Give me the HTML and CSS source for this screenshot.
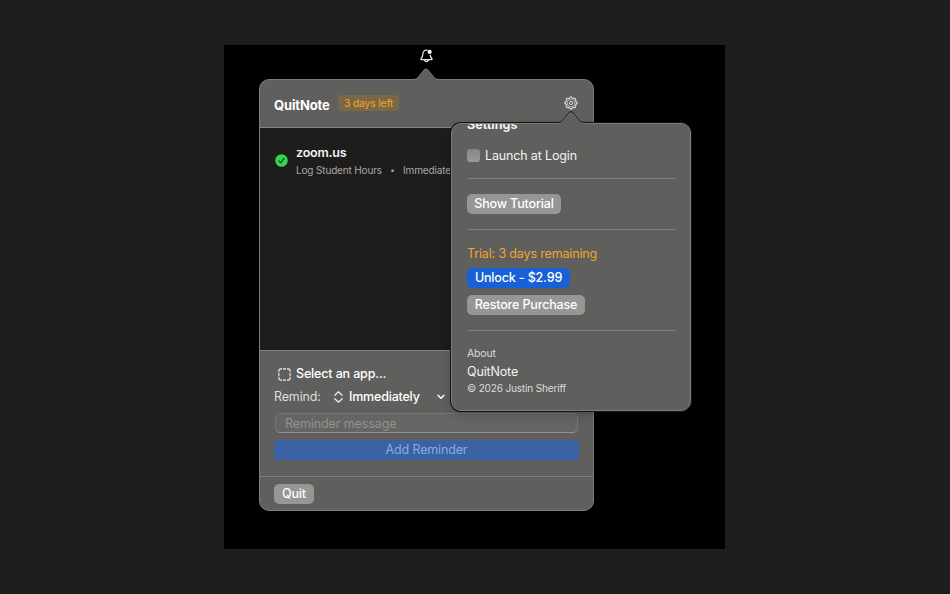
FILE: index.html
```html
<!DOCTYPE html>
<html lang="en">
<head>
  <meta charset="UTF-8" />
  <meta name="viewport" content="width=device-width, initial-scale=1.0"/>
  <title>QuitNote</title>
  <link rel="stylesheet" href="styles.css">
</head>
<body>

  <div class="desktop">
    <!-- Menu bar icon -->
    <div class="menubar">
      <svg class="bell" width="15" height="16" viewBox="0 0 15 16" fill="none" stroke="#e6e6e6" stroke-width="1.3" stroke-linecap="round" stroke-linejoin="round">
        <path d="M8 2.2C5.4 1.8 3.9 3.7 3.8 6C3.7 8.8 3 9.5 2.1 10.6C1.7 11.2 2 11.7 2.6 11.7H12.4C13 11.7 13.3 11.2 12.9 10.6C12 9.5 11.4 8.8 11.3 7.4"/>
        <path d="M5.7 12.2C6 14.1 9 14.1 9.3 12.2"/>
        <circle cx="10.6" cy="3.9" r="2.1" fill="#fff" stroke="none"/>
      </svg>
    </div>

    <!-- Main popover -->
    <div class="popover">
      <svg class="arrow" width="30" height="14" viewBox="0 0 30 14">
        <path d="M0 13C5 13 6 11.5 8 9L13 3Q15 .6 17 3L22 9C24 11.5 25 13 30 13V14H0Z" fill="#5f5f5d"/>
        <path d="M0 12.5C5 12.5 6 11.5 8 9L13 3Q15 .6 17 3L22 9C24 11.5 25 12.5 30 12.5" fill="none" stroke="#7d7d7b" stroke-width=".8"/>
      </svg>

      <div class="header">
        <h1>QuitNote</h1>
        <span class="badge">3 days left</span>
        <svg class="gear" width="14" height="14" viewBox="0 0 14 14" fill="none" stroke="#d6d6d5">
          <path d="M7 .7L8.5 2.1L11.4 2.6L11.9 5.5L13.3 7L11.9 8.5L11.4 11.4L8.5 11.9L7 13.3L5.5 11.9L2.6 11.4L2.1 8.5L.7 7L2.1 5.5L2.6 2.6L5.5 2.1Z" stroke-width="1.1" stroke-linejoin="round"/>
          <circle cx="7" cy="7" r="3.9" stroke-width=".7"/>
          <circle cx="7" cy="7" r="1.6" stroke-width="1"/>
        </svg>
      </div>

      <div class="list">
        <div class="item">
          <svg class="check" width="13" height="13" viewBox="0 0 13 13">
            <circle cx="6.5" cy="6.5" r="6.3" fill="#35d353"/>
            <path d="M4 6.9L5.8 8.8L9 4.3" fill="none" stroke="#16461f" stroke-width="1.2" stroke-linecap="round" stroke-linejoin="round"/>
          </svg>
          <div class="item-text">
            <div class="item-name">zoom.us</div>
            <div class="item-detail"><span>Log Student Hours</span><span class="dot">•</span><span>Immediately</span></div>
          </div>
        </div>
      </div>

      <div class="form">
        <div class="picker">
          <svg width="13" height="13" viewBox="0 0 13 13" fill="none" stroke="#f0f0f0" stroke-width="1.1" stroke-linecap="round">
            <path d="M.9 3.6V3Q.9 .9 3 .9H3.6M9.4 .9H10Q12.1 .9 12.1 3V3.6M12.1 9.4V10Q12.1 12.1 10 12.1H9.4M3.6 12.1H3Q.9 12.1 .9 10V9.4"/>
            <path d="M5.4 .9H7.6M5.4 12.1H7.6M.9 5.4V7.6M12.1 5.4V7.6"/>
          </svg>
          <span class="select-app">Select an app...</span>
        </div>
        <div class="remind">
          <span class="remind-label">Remind:</span>
          <svg class="updown" width="9" height="12" viewBox="0 0 9 12" fill="none" stroke="#f0f0f0" stroke-width="1.2" stroke-linecap="round" stroke-linejoin="round">
            <path d="M.8 4.3L4.5 .8L8.2 4.3M.8 7.7L4.5 11.2L8.2 7.7"/>
          </svg>
          <span class="remind-value">Immediately</span>
          <svg class="chevron" width="8" height="6" viewBox="0 0 8 6" fill="none" stroke="#fff" stroke-width="1.5" stroke-linecap="round" stroke-linejoin="round">
            <path d="M1.2 1.4L4 4.3L6.8 1.4"/>
          </svg>
        </div>
        <div class="input">Reminder message</div>
        <div class="add-btn">Add Reminder</div>
      </div>

      <div class="footer">
        <div class="btn quit">Quit</div>
      </div>
    </div>

    <!-- Settings popover, opens over the main one -->
    <div class="settings">
      <svg class="arrow" width="30" height="14" viewBox="0 0 30 14">
        <path d="M0 12.2C5 12.2 6 11 8 8.5L13 2.5Q15 0 17 2.5L22 8.5C24 11 25 12.2 30 12.2V14H0Z" fill="#5f5f5d"/>
        <path d="M0 11.5C5 11.5 6 10.5 8 8L13 2Q15 -.4 17 2L22 8C24 10.5 25 11.5 30 11.5" fill="none" stroke="#1c1c1b" stroke-width="1.1"/>
        <path d="M0 12.5C5 12.5 6 11.5 8 9L13 3Q15 .8 17 3L22 9C24 11.5 25 12.5 30 12.5" fill="none" stroke="#7b7b79" stroke-width=".7"/>
      </svg>
      <div class="settings-body">
        <h2>Settings</h2>
        <div class="launch"><span class="checkbox"></span><span class="launch-label">Launch at Login</span></div>
        <div class="section">
          <div class="btn tutorial">Show Tutorial</div>
        </div>
        <div class="section purchase">
          <div class="trial">Trial: 3 days remaining</div>
          <div class="btn unlock">Unlock - $2.99</div>
          <div class="btn restore">Restore Purchase</div>
        </div>
        <div class="section about">
          <div class="about-title">About</div>
          <div class="about-name">QuitNote</div>
          <div class="about-copy">© 2026 Justin Sheriff</div>
        </div>
      </div>
    </div>
  </div>

</body>
</html>
```

FILE: styles.css
```css
* {
  margin: 0; padding: 0;
  box-sizing: border-box;
}

body {
  height: 594px;
  overflow: hidden;
  background: #1e1e1e;
  font-family: Inter, sans-serif;
  font-size: 12.5px;
  letter-spacing: -0.15px;
  line-height: 16px;
  color: #f2f2f2;
  white-space: nowrap;
  padding: 45px 0 0 224px;
}

.desktop {
  position: relative;
  width: 501px;
  height: 504px;
  background: #000;
  padding: 0 35px;
}

.menubar {
  height: 34px;
  padding: 3px 0 0 160px;
}

.bell {
  display: block;
}

.popover {
  position: relative;
  width: 335px;
  height: 432px;
  background: #5f5f5d;
  border: 1px solid #7d7d7b;
  border-radius: 10px;
  display: flex;
  flex-direction: column;
}

.arrow {
  position: absolute;
  display: block;
}

.popover > .arrow {
  left: 151px;
  top: -13px;
}

.header {
  height: 48px;
  padding: 0 15px 0 14px;
  display: flex;
  align-items: center;
  border-bottom: 1px solid #858583;
}

h1 {
  font-size: 13px;
  font-weight: 700;
  width: 64px;
  padding-top: 2px;
  color: #fff;
}

.badge {
  height: 16px;
  width: 61px;
  line-height: 17px;
  margin-top: -1px;
  text-align: center;
  border-radius: 4px;
  background: #7a6747;
  color: #f5a623;
  font-size: 10.3px;
}

.gear {
  margin-left: auto;
  margin-top: -1px;
}

.list {
  height: 222px;
  background: #1e1d1c;
  padding: 17px 15px;
}

.item {
  display: flex;
  align-items: center;
}

.check {
  margin-right: 8px;
  margin-top: -1px;
}

.item-name {
  font-weight: 600;
  letter-spacing: -0.2px;
}

.item-detail {
  display: flex;
  font-size: 10px;
  line-height: 14px;
  margin-top: 2px;
  color: #a8a8a7;
}

.dot {
  width: 21px;
  text-align: center;
  font-size: 8px;
}

.form {
  height: 126px;
  border-top: 1px solid #80807e;
  padding: 14px 14px 0;
}

.picker {
  height: 18px;
  padding-left: 4px;
  display: flex;
  align-items: center;
  gap: 5px;
}

.select-app, .remind-value {
  font-weight: 500;
  color: #fff;
}

.remind {
  height: 20px;
  margin-top: 4px;
  display: flex;
  align-items: center;
}

.remind-label {
  width: 60px;
  color: #dededd;
}

.remind-value {
  margin-left: 6px;
  width: 88px;
  letter-spacing: -0.2px;
}

.input {
  height: 20px;
  margin: 6px 1px 0;
  padding-left: 9px;
  line-height: 19px;
  letter-spacing: -0.1px;
  border: 1px solid #757573;
  border-bottom-color: #929290;
  border-radius: 5px;
  background: #656563;
  color: #92928f;
}

.add-btn {
  height: 20px;
  margin-top: 7px;
  border-radius: 4px;
  background: #3a62a5;
  color: #8bacdd;
  line-height: 20px;
  text-align: center;
}

.footer {
  flex: 1;
  border-top: 1px solid #7d7d7b;
  padding: 7px 14px 0;
}

.btn {
  width: max-content;
  height: 20px;
  line-height: 19px;
  border-radius: 5px;
  background: #969694;
  color: #fff;
  font-weight: 500;
  text-align: center;
}

.quit {
  width: 40px;
}

.settings {
  position: absolute;
  left: 227px;
  top: 78px;
  width: 240px;
  height: 288px;
  background: #5f5f5d;
  border: 1px solid #7b7b79;
  border-radius: 10px;
  box-shadow: 0 0 0 1px #141413, 0 3px 10px rgba(0, 0, 0, 0.25);
}

.settings > .arrow {
  left: 104px;
  top: -13px;
}

/* content is scrolled slightly, the heading is cut by the top edge */
.settings-body {
  height: 100%;
  overflow: hidden;
  padding: 0 14px 0 15px;
}

h2 {
  font-size: 12.5px;
  font-weight: 700;
  letter-spacing: 0;
  margin-top: -7px;
}

.launch {
  margin-top: 14px;
  height: 17px;
  display: flex;
  align-items: center;
}

.checkbox {
  width: 13px;
  height: 13px;
  border-radius: 3px;
  background: linear-gradient(#858583, #9b9b99);
  margin-right: 5px;
}

.section {
  margin-top: 14px;
  padding-top: 15px;
  border-top: 1px solid #7f7f7d;
}

.trial {
  color: #f2a52c;
}

.unlock {
  margin-top: 6px;
  width: 103px;
  background: #1760d6;
}

.tutorial {
  width: 94px;
}

.purchase {
  margin-top: 15px;
  padding-top: 16px;
}

.restore {
  margin-top: 7px;
  width: 118px;
}

.about {
  margin-top: 15px;
}

.about-title, .about-copy {
  font-size: 10px;
  color: #dcdcdb;
}

.about-title {
  font-size: 10.5px;
}

.about-name {
  margin: 2px 0 0;
}
```
